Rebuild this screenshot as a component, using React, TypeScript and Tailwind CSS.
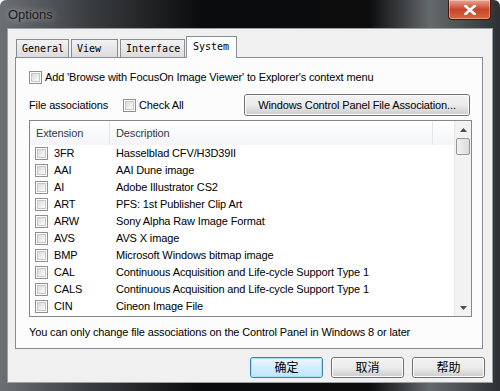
import React from "react";

type Row = { ext: string; desc: string };

const rows: Row[] = [
  { ext: "3FR", desc: "Hasselblad CFV/H3D39II" },
  { ext: "AAI", desc: "AAI Dune image" },
  { ext: "AI", desc: "Adobe Illustrator CS2" },
  { ext: "ART", desc: "PFS: 1st Publisher Clip Art" },
  { ext: "ARW", desc: "Sony Alpha Raw Image Format" },
  { ext: "AVS", desc: "AVS X image" },
  { ext: "BMP", desc: "Microsoft Windows bitmap image" },
  { ext: "CAL", desc: "Continuous Acquisition and Life-cycle Support Type 1" },
  { ext: "CALS", desc: "Continuous Acquisition and Life-cycle Support Type 1" },
  { ext: "CIN", desc: "Cineon Image File" },
];

const tabs = ["General", "View", "Interface", "System"];

function Check() {
  return (
    <span className="flex h-[13px] w-[13px] shrink-0 border border-[#8e8f8f] bg-white p-[1px]">
      <span className="h-full w-full border border-[#c6c6c6] bg-gradient-to-br from-[#dcdcdc] to-[#fbfbfb]" />
    </span>
  );
}

function Button({
  label,
  focused,
  className = "",
}: {
  label: string;
  focused?: boolean;
  className?: string;
}) {
  return (
    <div
      className={`flex items-center justify-center rounded-[3px] border ${
        focused ? "border-[#3c7fb1]" : "border-[#707070]"
      } ${className}`}
    >
      <div
        className={`flex h-full w-full items-center justify-center rounded-[2px] border ${
          focused
            ? "border-[#a8e0f6] bg-gradient-to-b from-[#eaf6fd] to-[#bee6fd]"
            : "border-[#fbfbfb] bg-gradient-to-b from-[#f2f2f2] via-[#ebebeb] to-[#cfcfcf]"
        } text-black`}
      >
        {label}
      </div>
    </div>
  );
}

export default function App() {
  return (
    <div
      className="relative h-[391px] w-[500px] overflow-hidden rounded-t-[6px] bg-[linear-gradient(90deg,#6b7074_0%,#3a3d40_18%,#0b0c0d_40%,#0d0d0e_74%,#656a6d_86%,#2e3133_100%)] px-[7px] pb-[8px] pt-[28px]"
      style={{ fontFamily: '"Liberation Sans", "Noto Sans CJK SC", sans-serif' }}
    >
      {/* title bar */}
      <div className="absolute left-[8px] top-[5px] text-[13px] text-[#1a1a1a] [text-shadow:0_0_6px_#c8cccf]">
        Options
      </div>
      <div className="absolute right-[9px] top-0 flex h-[20px] w-[43px] items-center justify-center rounded-b-[4px] border border-t-0 border-[#4a1810] bg-gradient-to-b from-[#e8a493] via-[#c8452b] to-[#d8683f] shadow-[inset_0_0_0_1px_rgba(255,255,255,0.35)]">
        <svg width="12" height="10" viewBox="0 0 12 10">
          <path
            d="M1.5 1 L10.5 9 M10.5 1 L1.5 9"
            stroke="#fff"
            strokeWidth="2.6"
            strokeLinecap="square"
          />
        </svg>
      </div>

      {/* client area */}
      <div className="flex h-full flex-col border border-[#9aa1a6] bg-[#f0f0f0] pl-[7px] pr-[9px] pt-[7px]">
        {/* tabs */}
        <div
          className="flex h-[21px] items-end pl-[1px] text-[10px] text-black"
          style={{ fontFamily: '"DejaVu Sans Mono", monospace' }}
        >
          {tabs.map((t, i) => {
            const sel = i === tabs.length - 1;
            const widths = ["w-[53px]", "w-[47px]", "w-[65px]", "w-[51px]"];
            return (
              <div
                key={t}
                className={`flex items-center border border-b-0 border-[#898c95] ${widths[i]} ${
                  sel
                    ? "relative z-10 -mb-[1px] -ml-[1px] h-[22px] bg-[#fcfcfc] pb-[3px] pl-[6px]"
                    : "mr-[2px] h-[18px] bg-gradient-to-b from-[#f2f2f2] to-[#dcdcdc] pl-[5px]"
                }`}
              >
                {t}
              </div>
            );
          })}
        </div>

        {/* panel */}
        <div className="flex h-[292px] flex-col border border-[#898c95] bg-[#fcfcfc] pl-[13px] pr-[10px] pt-[13px] text-[11px] tracking-[-0.13px] text-black">
          <div className="flex h-[13px] items-center gap-[3px]">
            <Check />
            <span>Add 'Browse with FocusOn Image Viewer' to Explorer's context menu</span>
          </div>

          <div className="mt-[10px] flex h-[22px] items-center">
            <span className="w-[94px]">File associations</span>
            <Check />
            <span className="ml-[3px]">Check All</span>
            <Button
              label="Windows Control Panel File Association..."
              className="ml-auto mr-[2px] h-[22px] w-[226px]"
            />
          </div>

          {/* list */}
          <div className="mt-[4px] flex h-[197px] border border-[#828790] bg-white">
            <div className="flex flex-1 flex-col overflow-hidden">
              <div className="flex h-[24px] shrink-0 items-center bg-gradient-to-b from-white to-[#f4f5f7] text-[#2e3b4b]">
                <div className="flex h-full w-[80px] items-center border-r border-[#e3e5e8] pl-[6px]">
                  Extension
                </div>
                <div className="flex h-full w-[323px] items-center border-r border-[#e3e5e8] pl-[6px]">
                  Description
                </div>
              </div>
              {rows.map((r) => (
                <div key={r.ext} className="flex h-[17px] shrink-0 items-center">
                  <div className="flex w-[86px] items-center pl-[5px]">
                    <Check />
                    <span className="ml-[6px]">{r.ext}</span>
                  </div>
                  <span className="whitespace-nowrap">{r.desc}</span>
                </div>
              ))}
            </div>
            {/* scrollbar */}
            <div className="flex w-[17px] shrink-0 flex-col border-l border-[#e8e8e8] bg-[#f2f2f2]">
              <div className="flex h-[17px] items-center justify-center">
                <svg width="7" height="4" viewBox="0 0 7 4">
                  <path d="M0 4 L3.5 0 L7 4 Z" fill="#4d4d4d" />
                </svg>
              </div>
              <div className="mx-[1px] h-[17px] rounded-[2px] border border-[#979797] bg-gradient-to-r from-[#f1f1f1] to-[#dcdcdc]" />
              <div className="flex-1" />
              <div className="flex h-[17px] items-center justify-center">
                <svg width="7" height="4" viewBox="0 0 7 4">
                  <path d="M0 0 L3.5 4 L7 0 Z" fill="#4d4d4d" />
                </svg>
              </div>
            </div>
          </div>

          <div className="mt-[7px]">
            You can only change file associations on the Control Panel in Windows 8 or later
          </div>
        </div>

        {/* dialog buttons */}
        <div className="-mr-[2px] mt-[8px] flex justify-end gap-[8px] text-[12px]">
          <Button label="确定" focused className="h-[21px] w-[73px]" />
          <Button label="取消" className="h-[21px] w-[73px]" />
          <Button label="帮助" className="h-[21px] w-[73px]" />
        </div>
      </div>
    </div>
  );
}
